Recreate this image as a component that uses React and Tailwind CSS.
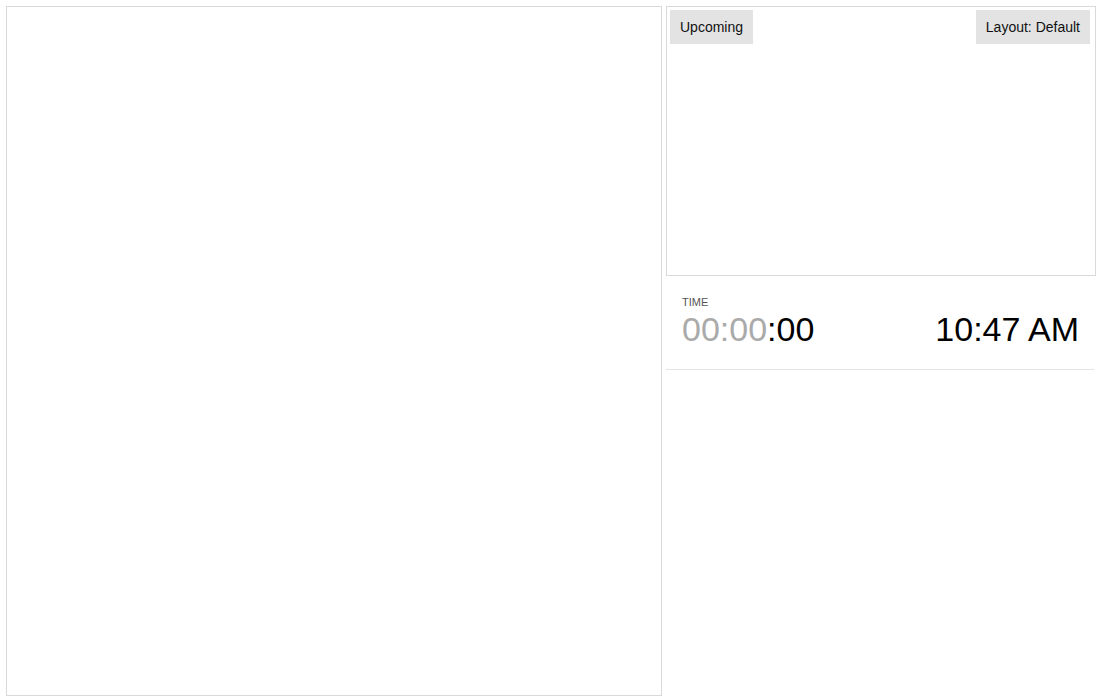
export default function App() {
  return (
    <div
      className="w-[1100px] h-[700px] bg-white flex pt-[6px] pl-[6px] pr-[4px] pb-[4px] gap-[4px]"
      style={{ fontFamily: '"Liberation Sans", Arial, sans-serif' }}
    >
      <div className="w-[656px] h-[690px] border border-[#d9d9d9] bg-white shrink-0" />
      <div className="w-[430px] flex flex-col">
        <div className="h-[270px] border border-[#d9d9d9] pt-[3px] pl-[3px] pr-[5px] flex justify-between items-start">
          <div className="h-[34px] px-[10px] bg-[#e3e3e3] text-[14px] text-[#111] flex items-center">
            Upcoming
          </div>
          <div className="h-[34px] px-[10px] bg-[#e3e3e3] text-[14px] text-[#111] flex items-center">
            Layout: Default
          </div>
        </div>
        <div className="w-[428px] h-[94px] border-b border-[#e3e3e3] pl-[16px] pr-[15px] pt-[20px]">
          <div className="text-[11px] leading-[13px] text-[#555] uppercase">Time</div>
          <div className="mt-[1px] flex justify-between items-baseline text-[34px] leading-[38px] text-black">
            <div>
              <span className="text-[#aaaaaa]">00:00</span>
              <span>:00</span>
            </div>
            <div>10:47 AM</div>
          </div>
        </div>
      </div>
    </div>
  );
}
